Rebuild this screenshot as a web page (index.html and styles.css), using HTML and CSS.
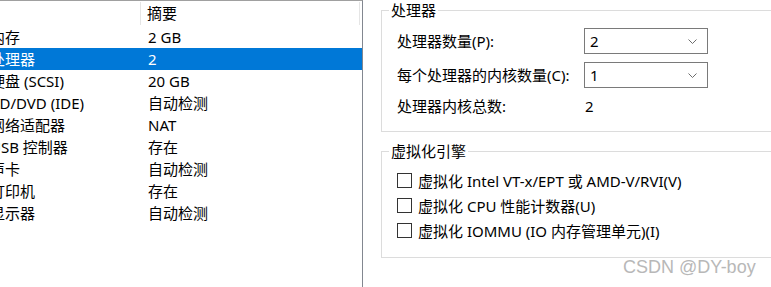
FILE: index.html
```html
<!DOCTYPE html>
<html lang="zh-CN">
<head>
    <meta charset="UTF-8">
    <title>虚拟机设置 - 处理器</title>
    <link rel="stylesheet" href="styles.css">
</head>
<body>
    <div class="device-list">
        <div class="list-head">
            <span class="col-device"></span>
            <span class="col-summary">摘要</span>
            <span class="col-rest"></span>
        </div>
        <div class="row"><span class="col-device">内存</span><span class="col-summary">2 GB</span></div>
        <div class="row selected"><span class="col-device">处理器</span><span class="col-summary">2</span></div>
        <div class="row"><span class="col-device">硬盘 (SCSI)</span><span class="col-summary">20 GB</span></div>
        <div class="row"><span class="col-device">CD/DVD (IDE)</span><span class="col-summary">自动检测</span></div>
        <div class="row"><span class="col-device">网络适配器</span><span class="col-summary">NAT</span></div>
        <div class="row"><span class="col-device">USB 控制器</span><span class="col-summary">存在</span></div>
        <div class="row"><span class="col-device">声卡</span><span class="col-summary">自动检测</span></div>
        <div class="row"><span class="col-device">打印机</span><span class="col-summary">存在</span></div>
        <div class="row"><span class="col-device">显示器</span><span class="col-summary">自动检测</span></div>
    </div>

    <div class="settings">
        <fieldset class="group">
            <legend>处理器</legend>
            <div class="form-grid">
                <label>处理器数量(P):</label>
                <div class="select">
                    <span>2</span>
                    <svg width="9" height="5" viewBox="0 0 9 5"><polyline points="0.5,0.5 4.5,4.5 8.5,0.5" fill="none" stroke="#6d6d6d" stroke-width="1"/></svg>
                </div>
                <label>每个处理器的内核数量(C):</label>
                <div class="select">
                    <span>1</span>
                    <svg width="9" height="5" viewBox="0 0 9 5"><polyline points="0.5,0.5 4.5,4.5 8.5,0.5" fill="none" stroke="#6d6d6d" stroke-width="1"/></svg>
                </div>
                <label>处理器内核总数:</label>
                <span class="value">2</span>
            </div>
        </fieldset>

        <fieldset class="group engine">
            <legend>虚拟化引擎</legend>
            <div class="check-row"><span class="checkbox"></span>虚拟化 Intel VT-x/EPT 或 AMD-V/RVI(V)</div>
            <div class="check-row"><span class="checkbox"></span>虚拟化 CPU 性能计数器(U)</div>
            <div class="check-row"><span class="checkbox"></span>虚拟化 IOMMU (IO 内存管理单元)(I)</div>
        </fieldset>
    </div>

    <div class="watermark">CSDN @DY-boy</div>
</body>
</html>
```

FILE: styles.css
```css
body {
    margin: 0;
    width: 771px;
    height: 287px;
    overflow: hidden;
    display: flex;
    background-color: #ffffff;
    color: #000000;
    font-family: "Noto Sans", "Noto Sans CJK SC", sans-serif;
    font-size: 15px;
    position: relative;
}

/* left device list */
.device-list {
    width: 362px;
    flex-shrink: 0;
    border-top: 1px solid #a0a0a0;
    border-right: 1px solid #828790;
}

.list-head {
    display: grid;
    grid-template-columns: 141px 219px 2px;
    height: 24px;
    padding-top: 1px;
}

.list-head span {
    line-height: 23px;
    height: 23px;
    border-right: 1px solid #e5e5e5;
}

.list-head .col-summary {
    padding-left: 6px;
}

.list-head .col-rest {
    border-right: none;
}

.row {
    display: grid;
    grid-template-columns: 141px 1fr;
    height: 22px;
    line-height: 22px;
    white-space: nowrap;
}

/* first column is scrolled a little to the left */
.row .col-device {
    text-indent: -10px;
    overflow: hidden;
}

.row .col-summary {
    padding-left: 7px;
}

.row.selected {
    background-color: #0078d7;
    color: #ffffff;
}

/* right settings */
.settings {
    flex: 1;
    padding-left: 18px;
}

.group {
    margin: 0 -20px 0 0;
    border: 1px solid #dcdcdc;
    padding: 8px 15px 15px 15px;
}

.group legend {
    margin-left: -8px;
    padding: 0 2px;
    line-height: 20px;
}

.form-grid {
    display: grid;
    grid-template-columns: 187px 124px;
    grid-template-rows: 26px 26px 20px;
    row-gap: 8px;
    align-items: center;
}

.form-grid label {
    line-height: 20px;
}

.select {
    box-sizing: border-box;
    height: 26px;
    border: 1px solid #7a7a7a;
    display: flex;
    align-items: center;
    justify-content: space-between;
    padding: 0 10px 0 5px;
}

.value {
    padding-left: 1px;
}

.group.engine {
    margin-top: 9px;
    padding: 7px 15px 14px 15px;
}

.check-row {
    height: 25px;
    display: flex;
    align-items: center;
    gap: 6px;
    white-space: nowrap;
}

.checkbox {
    width: 13px;
    height: 13px;
    border: 1px solid #333333;
    flex-shrink: 0;
}

.watermark {
    position: absolute;
    left: 623px;
    top: 256px;
    font-family: "Liberation Sans", Arial, sans-serif;
    font-size: 18px;
    line-height: 22px;
    color: #b8b8b8;
}
```
